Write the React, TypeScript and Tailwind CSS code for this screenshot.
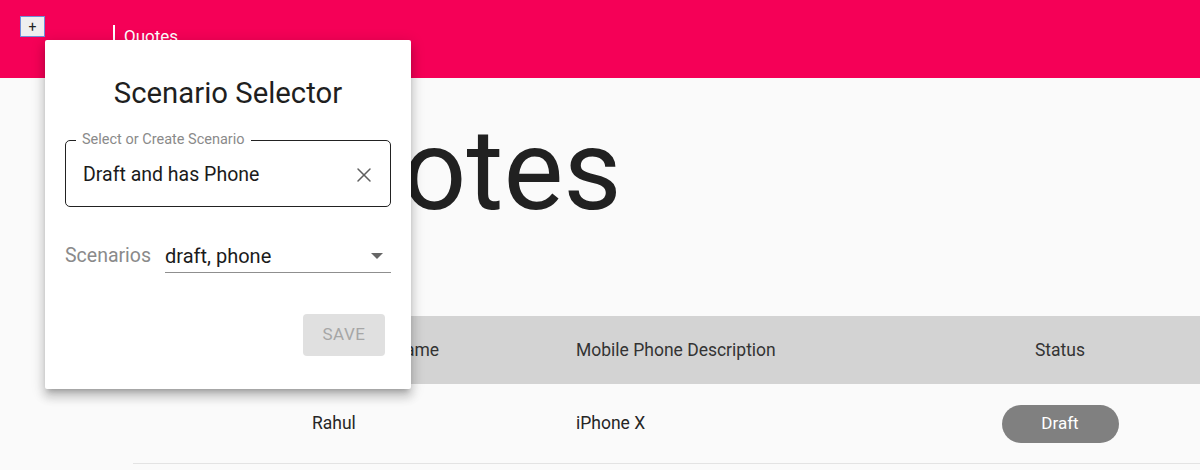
import { X } from 'lucide-react';

const font = { fontFamily: 'Roboto, "Liberation Sans", sans-serif' };

function TopBar() {
  return (
    <header className="h-[78px] bg-[#f50057] flex items-start">
      <button className="ml-[20px] mt-[16px] w-[25px] h-[21px] bg-[#efefef] border border-[#6f8fd8] text-[#222] text-[14px] leading-none flex items-center justify-center">
        +
      </button>
      <div className="ml-[68px] mt-[25px] border-l-2 border-white pl-[9px] h-[21px] flex items-end">
        <span className="text-white text-[17px] leading-[20px]">Quotes</span>
      </div>
    </header>
  );
}

function ScenarioSelector() {
  return (
    <div className="absolute left-[45px] top-[40px] w-[366px] h-[349px] bg-white rounded-[2px] shadow-[0_5px_5px_-3px_rgba(0,0,0,0.2),0_8px_10px_1px_rgba(0,0,0,0.14),0_3px_14px_2px_rgba(0,0,0,0.12)] px-[20px] pt-[36px]">
      <h2 className="text-center text-[29.3px] leading-[34px] text-[#1f1f1f]">Scenario Selector</h2>

      {/* outlined field */}
      <div className="relative mt-[30px] h-[67px] border-[1.5px] border-[#222] rounded-[5px] flex items-center pl-[17px] pr-[14px] pt-[2px]">
        <span className="absolute left-[10px] -top-[10px] bg-white px-[6px] text-[14.5px] leading-[18px] text-[#8a8a8a]">
          Select or Create Scenario
        </span>
        <span className="flex-1 text-[19.5px] text-[#1b1b1b]">Draft and has Phone</span>
        <X size={24} strokeWidth={1.5} className="text-[#5f5f5f]" />
      </div>

      {/* select row */}
      <div className="mt-[32px] flex items-end">
        <span className="text-[19.5px] leading-[34px] text-[#8a8a8a] w-[100px]">Scenarios</span>
        <div className="flex-1 h-[34px] border-b border-[#8f8f8f] flex items-center pr-[8px]">
          <span className="flex-1 text-[20px] text-[#1b1b1b]">draft, phone</span>
          <svg width="12" height="6" viewBox="0 0 10 5" className="text-[#666]">
            <path d="M0 0 L5 5 L10 0 Z" fill="currentColor" />
          </svg>
        </div>
      </div>

      <div className="mt-[41px] flex justify-end pr-[6px]">
        <button className="w-[82px] h-[42px] rounded-[4px] bg-[#e0e0e0] text-[#a6a6a6] text-[17px] tracking-[0.5px] uppercase">
          Save
        </button>
      </div>
    </div>
  );
}

function QuotesTable() {
  const cols = 'grid grid-cols-[163px_264px_380px_240px_1fr]';
  return (
    <div className="ml-[133px] w-[1200px]">
      <div className={`${cols} h-[68px] bg-[#d3d3d3] items-center text-[17.5px] text-[#333]`}>
        <div />
        <div className="pl-[16px]">Customer Name</div>
        <div className="pl-[16px]">Mobile Phone Description</div>
        <div className="text-center">Status</div>
        <div />
      </div>
      <div className={`${cols} h-[80px] items-center border-b border-[#e3e3e3] text-[17.5px] text-[#262626]`}>
        <div />
        <div className="pl-[16px]">Rahul</div>
        <div className="pl-[16px]">iPhone X</div>
        <div className="flex justify-center">
          <span className="w-[117px] h-[38px] rounded-full bg-[#808080] text-white text-[17px] flex items-center justify-center">Draft</span>
        </div>
        <div />
      </div>
    </div>
  );
}

export default function App() {
  return (
    <div className="relative w-[1200px] h-[470px] overflow-hidden bg-[#fafafa]" style={font}>
      <TopBar />
      <main>
        <h1 className="ml-[262px] mt-[28px] h-[210px] text-[113px] leading-[130px] text-[#212121]">
          Quotes
        </h1>
        <QuotesTable />
      </main>
      <ScenarioSelector />
    </div>
  );
}
